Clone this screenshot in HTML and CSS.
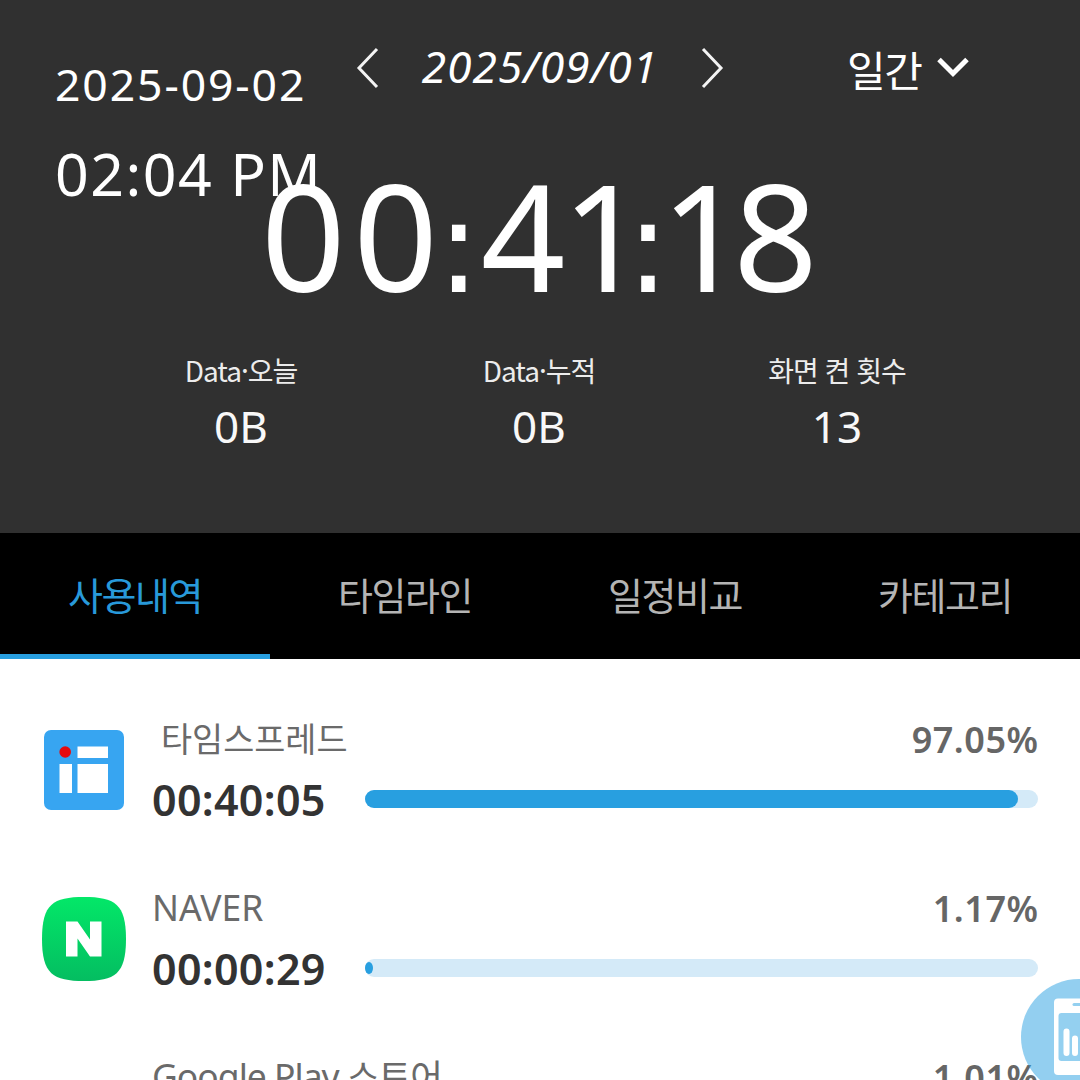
FILE: index.html
```
<!DOCTYPE html>
<html lang="ko">
<head>
<meta charset="utf-8">
<title>사용내역</title>
<link rel="stylesheet" href="styles.css">
</head>
<body>
<div class="app">
  <header class="summary">
    <div class="toolbar">
      <div class="date-nav">
        <svg class="arrow" viewBox="0 0 24 44"><path d="M21 3 3 22 21 41"/></svg>
        <span class="date">2025/09/01</span>
        <svg class="arrow" viewBox="0 0 24 44"><path d="M3 3 21 22 3 41"/></svg>
      </div>
      <div class="period">
        <span class="period-label">일간</span>
        <svg class="chevron" viewBox="0 0 34 24"><path d="M3 4.500 17 18.500 31 4.500"/></svg>
      </div>
    </div>
    <div class="total"><span class="hours">00</span><span class="colon">:</span><span class="four">4</span><span class="one">1</span><span class="colon tight">:</span><span class="one last">1</span><span>8</span></div>
    <div class="stats">
      <div class="stat"><span class="stat-label">Data·오늘</span><span class="stat-value">0B</span></div>
      <div class="stat"><span class="stat-label">Data·누적</span><span class="stat-value">0B</span></div>
      <div class="stat"><span class="stat-label">화면 켠 횟수</span><span class="stat-value">13</span></div>
    </div>
    <div class="stamp">
      <div class="stamp-date">2025-09-02</div>
      <div class="stamp-time">02:04 PM</div>
    </div>
  </header>
  <nav class="tabs">
    <span class="tab active">사용내역</span>
    <span class="tab">타임라인</span>
    <span class="tab">일정비교</span>
    <span class="tab">카테고리</span>
  </nav>
  <main class="list">
    <section class="row">
      <svg class="icon" viewBox="0 0 84 84">
        <rect x="2" y="2" width="80" height="80" rx="7" fill="#37a5f1"/>
        <circle cx="23.200" cy="24" r="5.800" fill="#e60a0d"/>
        <path fill="#fff" d="M35.500 18.500H66v11.500H35.500zM17.500 36H30v29H17.500zM35.500 36H66v29H35.500z"/>
      </svg>
      <div class="info">
        <div class="line"><span class="name name-ko">타임스프레드</span><span class="percent">97.05%</span></div>
        <div class="line"><span class="time">00:40:05</span><div class="bar"><div class="fill" style="width:97.05%"></div></div></div>
      </div>
    </section>
    <section class="row">
      <svg class="icon" viewBox="0 0 84 84">
        <defs><linearGradient id="green" x1="0" y1="0" x2="0" y2="1"><stop offset="0" stop-color="#03e768"/><stop offset="1" stop-color="#04bd61"/></linearGradient></defs>
        <path fill="url(#green)" d="M42 0C73 0 84 7 84 42S73 84 42 84 0 77 0 42 11 0 42 0z"/>
        <path fill="#fff" d="M24 24.500H35.500L48 42.500V24.500H59.500V59.500H48L35.500 41.500V59.500H24z"/>
      </svg>
      <div class="info">
        <div class="line"><span class="name">NAVER</span><span class="percent">1.17%</span></div>
        <div class="line"><span class="time">00:00:29</span><div class="bar"><div class="fill small" style="width:1.17%"></div></div></div>
      </div>
    </section>
    <section class="row">
      <div class="icon"></div>
      <div class="info">
        <div class="line"><span class="name name-long">Google Play 스토어</span><span class="percent">1.01%</span></div>
      </div>
    </section>
  </main>
  <svg class="fab" viewBox="0 0 116 116">
    <circle cx="58" cy="58" r="58" fill="#28a0e2" fill-opacity=".5"/>
    <rect x="33" y="19.500" width="50" height="76.500" rx="4" fill="#fff"/>
    <rect x="37.500" y="34" width="41" height="48" rx="3" fill="#94d0f0"/>
    <path d="M53 25.500H63" stroke="#94d0f0" stroke-width="3" stroke-linecap="round"/>
    <path d="M45.500 52.500V74M54 59.500V74M62.500 47V74M71 56V74" stroke="#fff" stroke-width="6" stroke-linecap="round"/>
  </svg>
</div>
</body>
</html>
```
FILE: styles.css
```
* { box-sizing: border-box; }
body { margin: 0; background: #fff; }
.app {
  position: relative;
  width: 1080px;
  height: 1080px;
  overflow: hidden;
  font-family: "Noto Sans", "Noto Sans CJK KR", sans-serif;
  white-space: nowrap;
}
.summary {
  position: relative;
  height: 533px;
  background: #303030;
  color: #fff;
}
.toolbar {
  display: grid;
  grid-template-columns: 1fr 368px 1fr;
  align-items: center;
  height: 136px;
}
.date-nav {
  grid-column: 2;
  display: flex;
  align-items: center;
  justify-content: space-between;
}
.arrow {
  width: 24px;
  height: 44px;
  fill: none;
  stroke: #f4f4f4;
  stroke-width: 3;
}
.date {
  font-size: 44px;
  line-height: 60px;
  font-style: italic;
  letter-spacing: 1.100px;
  margin-bottom: 4px;
}
.period {
  display: flex;
  align-items: center;
  gap: 14px;
  padding-left: 123px;
}
.period-label {
  font: 42px/60px "Noto Sans CJK KR", sans-serif;
  letter-spacing: -1.500px;
  margin-right: 1px;
  margin-top: 2px;
}
.chevron {
  width: 34px;
  height: 24px;
  margin-bottom: 2px;
  fill: none;
  stroke: #fff;
  stroke-width: 5;
}
.total {
  display: flex;
  align-items: baseline;
  height: 206px;
  padding-left: 261px;
  font-size: 148px;
  line-height: 198px;
}
.hours { letter-spacing: 7.500px; margin-right: -8.500px; }
.colon { font: 130px/130px "DejaVu Sans", sans-serif; }
.colon.tight { margin-right: -9px; }
.four { margin-right: -3.500px; }
.one { margin-right: -20.400px; }
.one.last { margin-right: -12.400px; }
.stats {
  display: grid;
  grid-template-columns: repeat(3, 298px);
  padding-left: 92px;
}
.stat {
  display: flex;
  flex-direction: column;
  align-items: center;
}
.stat-label {
  font: 28px/56px "Noto Sans CJK KR", sans-serif;
  letter-spacing: -1px;
  color: #ececec;
}
.stat-value { font-size: 44px; line-height: 56px; color: #f8f8f8; }
.stamp { position: absolute; left: 55px; top: 53px; }
.stamp-date { font-size: 44.500px; line-height: 62px; letter-spacing: 1.900px; }
.stamp-time {
  font-size: 59px;
  line-height: 82px;
  letter-spacing: 1.500px;
  margin-top: 17px;
}
.tabs {
  display: grid;
  grid-template-columns: repeat(4, 1fr);
  height: 126px;
  background: #000;
  color: #b4b4b4;
  font: 38px/122px "Noto Sans CJK KR", sans-serif;
  letter-spacing: -1.500px;
  text-align: center;
}
.tab { height: 126px; }
.tab.active { color: #2899d9; box-shadow: inset 0 -5px #289fe0; }
.list { padding: 26px 42px 0; }
.row {
  display: flex;
  align-items: center;
  gap: 26px;
  height: 169px;
}
.icon { width: 84px; height: 84px; flex: none; }
.info { flex: 1; height: 120px; }
.line {
  display: flex;
  align-items: center;
  justify-content: space-between;
  height: 60px;
}
.name { font-size: 35.500px; line-height: 50px; color: #6a6a6a; margin-bottom: 3px; }
.name-ko { font-size: 33.800px; padding-left: 9px; margin-bottom: 1px; }
.name-long { letter-spacing: -1px; }
.percent { font-size: 36px; font-weight: 600; letter-spacing: 0.500px; margin-right: -0.500px; color: #666; }
.time { font-size: 43px; font-weight: 600; letter-spacing: 0.300px; color: #333; }
.bar {
  width: 673px;
  height: 18px;
  margin-bottom: 2px;
  border-radius: 9px;
  background: #d4eaf8;
}
.fill { height: 18px; border-radius: 9px; background: #289fe0; }
.fill.small { height: 12px; position: relative; top: 3px; border-radius: 50%; }
.fab { position: absolute; left: 1021px; top: 979px; width: 116px; height: 116px; }
```
